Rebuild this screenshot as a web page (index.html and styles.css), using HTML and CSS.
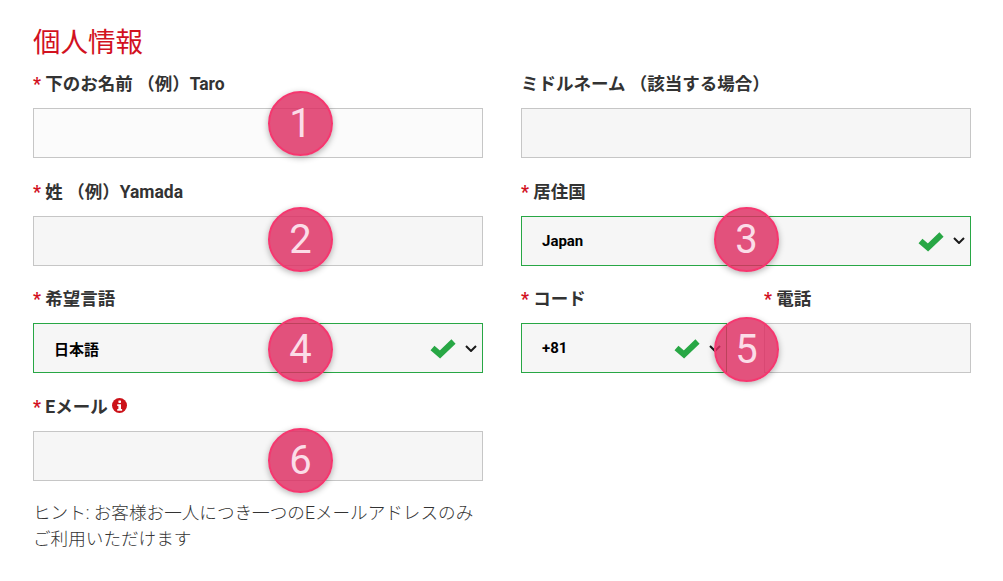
FILE: index.html
```html
<!DOCTYPE html>
<html lang="ja">
<head>
  <meta charset="UTF-8">
  <meta name="viewport" content="width=device-width, initial-scale=1.0">
  <title>個人情報</title>
  <link rel="stylesheet" href="styles.css">
</head>
<body>
  <div class="page">
    <h1>個人情報</h1>
    <form class="form-grid">
      <div class="field">
        <label><span class="req">*</span> 下のお名前 （例）Taro</label>
        <input type="text" class="input first">
      </div>
      <div class="field">
        <label>ミドルネーム （該当する場合）</label>
        <input type="text" class="input">
      </div>
      <div class="field">
        <label><span class="req">*</span> 姓 （例）Yamada</label>
        <input type="text" class="input">
      </div>
      <div class="field">
        <label><span class="req">*</span> 居住国</label>
        <div class="select valid">
          <span>Japan</span>
          <svg class="check" viewBox="0 0 26 18"><path d="M2.5 9l7.5 6.5L23.5 2.5"/></svg>
          <svg class="chevron" viewBox="0 0 12 7"><path d="M1 1l5 5 5-5"/></svg>
        </div>
      </div>
      <div class="field">
        <label><span class="req">*</span> 希望言語</label>
        <div class="select valid">
          <span>日本語</span>
          <svg class="check" viewBox="0 0 26 18"><path d="M2.5 9l7.5 6.5L23.5 2.5"/></svg>
          <svg class="chevron" viewBox="0 0 12 7"><path d="M1 1l5 5 5-5"/></svg>
        </div>
      </div>
      <div class="field phone-row">
        <div>
          <label><span class="req">*</span> コード</label>
          <div class="select valid">
            <span>+81</span>
            <svg class="check" viewBox="0 0 26 18"><path d="M2.5 9l7.5 6.5L23.5 2.5"/></svg>
            <svg class="chevron" viewBox="0 0 12 7"><path d="M1 1l5 5 5-5"/></svg>
          </div>
        </div>
        <div>
          <label><span class="req">*</span> 電話</label>
          <input type="text" class="input">
        </div>
      </div>
      <div class="field">
        <label><span class="req">*</span> Eメール
          <svg class="info" viewBox="0 0 16 16"><circle cx="8" cy="8" r="8"/><rect x="6.8" y="2.6" width="2.8" height="2.6" rx=".6"/><path d="M5.6 6.6h4v5h1.2v2H5.6v-2h1.2v-3H5.6z"/></svg>
        </label>
        <input type="text" class="input">
        <p class="hint">ヒント: お客様お一人につき一つのEメールアドレスのみご利用いただけます</p>
      </div>
    </form>

    <div class="badge b1">1</div>
    <div class="badge b2">2</div>
    <div class="badge b3">3</div>
    <div class="badge b4">4</div>
    <div class="badge b5">5</div>
    <div class="badge b6">6</div>
  </div>
</body>
</html>
```

FILE: styles.css
```css
body {
  margin: 0;
  background: #fff;
  color: #333;
  font-family: Roboto, "Noto Sans CJK JP", sans-serif;
}
.page {
  position: relative;
  width: 1003px;
  height: 581px;
  padding: 26px 32px 0 33px;
  box-sizing: border-box;
  overflow: hidden;
}
h1 {
  margin: 0 0 12px;
  font-size: 27.5px;
  line-height: 34px;
  font-weight: 400;
  color: #d2121f;
}
.form-grid {
  display: grid;
  grid-template-columns: 450px 450px;
  column-gap: 38px;
  grid-auto-rows: 107.5px;
}
label {
  display: block;
  height: 25px;
  margin-bottom: 11px;
  font-size: 17.5px;
  line-height: 24px;
  font-weight: 700;
  color: #333;
  white-space: nowrap;
}
.req {
  color: #d2121f;
}
.input {
  display: block;
  width: 100%;
  height: 50px;
  box-sizing: border-box;
  border: 1px solid #c6c6c6;
  background: #f6f6f6;
  outline: none;
}
.input.first {
  background: #fbfbfb;
}
.select {
  display: flex;
  align-items: center;
  height: 50px;
  box-sizing: border-box;
  padding: 0 5px 0 20px;
  border: 1px solid #c6c6c6;
  background: #f6f6f6;
  font-size: 15px;
  font-weight: 700;
  color: #000;
}
.select.valid {
  border-color: #28a745;
}
.select span {
  flex: 1;
}
.check {
  width: 26px;
  height: 18px;
  margin-right: 9px;
  overflow: visible;
}
.check path {
  fill: none;
  stroke: #28a745;
  stroke-width: 6;
}
.chevron {
  width: 12px;
  height: 7px;
}
.chevron path {
  fill: none;
  stroke: #1a1a1a;
  stroke-width: 2;
}
.phone-row {
  display: grid;
  grid-template-columns: 206px 207px;
  column-gap: 37px;
}
.info {
  width: 15px;
  height: 15px;
  vertical-align: 0;
  fill: #fff;
}
.info circle {
  fill: #cc1219;
}
.hint {
  margin: 19px 0 0;
  font-size: 17.6px;
  line-height: 26px;
  font-weight: 300;
  color: #333;
}
.badge {
  position: absolute;
  width: 65px;
  height: 65px;
  box-sizing: border-box;
  border: 2px solid #f5376f;
  border-radius: 50%;
  background: rgba(221, 44, 96, 0.82);
  box-shadow: 0 2px 6px rgba(0, 0, 0, 0.3);
  color: #fbdde8;
  font-size: 40px;
  line-height: 61px;
  text-align: center;
}
.b1 { left: 268px; top: 91px; }
.b2 { left: 268px; top: 207px; }
.b3 { left: 714px; top: 207px; }
.b4 { left: 268px; top: 317px; }
.b5 { left: 714px; top: 317px; }
.b6 { left: 268px; top: 428px; }
```
